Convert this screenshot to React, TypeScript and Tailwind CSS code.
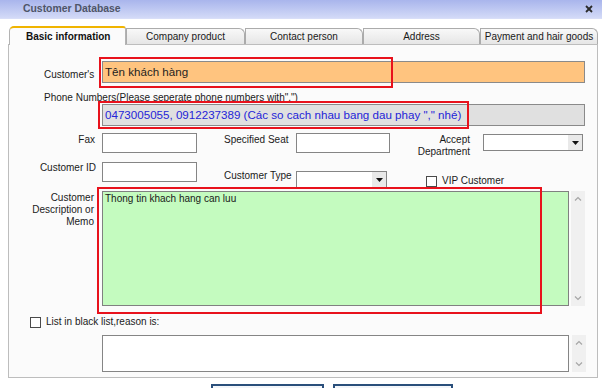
import React from "react";

const Chevron = ({ up }: { up?: boolean }) => (
  <svg width="8" height="5" viewBox="0 0 8 5">
    <polyline
      points={up ? "1,4.5 4,1.5 7,4.5" : "1,0.5 4,3.5 7,0.5"}
      fill="none"
      stroke="#a6a6a6"
      strokeWidth="1.2"
    />
  </svg>
);

const Scroll = ({ h }: { h: string }) => (
  <div className={`${h} w-[14px] bg-[#f0f0f0] flex flex-col items-center justify-between py-[5px]`}>
    <Chevron up />
    <Chevron />
  </div>
);

const Select = ({ w }: { w: string }) => (
  <div className={`${w} h-[17px] bg-white border border-[#858585] flex justify-end`}>
    <div className="w-[14px] h-full bg-[#e9e9e9] flex items-center justify-center">
      <svg width="7" height="4" viewBox="0 0 7 4">
        <polygon points="0,0 7,0 3.5,4" fill="#111" />
      </svg>
    </div>
  </div>
);

const Red = ({ cls }: { cls: string }) => (
  <div className={`absolute border-2 border-[#e8121c] pointer-events-none ${cls}`} />
);

export default function App() {
  return (
    <div className="w-[602px] h-[388px] overflow-hidden bg-white font-['Liberation_Sans',Arial,sans-serif] text-[10px] text-[#1a1a1a]">
      {/* title bar */}
      <div className="h-[19px] flex items-center justify-between pl-[23px] pr-[9px] bg-gradient-to-b from-[#a9b5ec] to-[#d3daf7] border-b border-[#d8def8]">
        <span className="text-[10.4px] font-bold text-[#4e5568] leading-none">Customer Database</span>
        <svg width="8" height="8" viewBox="0 0 8 8">
          <line x1="1" y1="1" x2="7" y2="7" stroke="#2b2b2b" strokeWidth="1.8" />
          <line x1="7" y1="1" x2="1" y2="7" stroke="#2b2b2b" strokeWidth="1.8" />
        </svg>
      </div>

      {/* tabs */}
      <div className="mt-[7px] pl-[9px] flex items-end h-[18px]">
        <div className="relative z-10 -mb-px w-[117px] h-[19px] bg-[#fbfbfb] border-t-2 border-l border-r border-t-[#f0b400] border-l-[#b3b3b3] border-r-[#b3b3b3] rounded-tl-[5px] rounded-tr-[3px] pl-[16px] pt-[3px] font-bold leading-[12px] text-[#111]">
          Basic information
        </div>
        {[
          ["Company product", "w-[119px]"],
          ["Contact person", "w-[118px]"],
          ["Address", "w-[117px]"],
          ["Payment and hair goods", "w-[118px]"],
        ].map(([t, w]) => (
          <div
            key={t}
            className={`${w} h-[16px] border border-b-0 border-[#ababab] rounded-tr-[6px] bg-gradient-to-b from-[#f8f8f8] to-[#e6e6e6] flex items-center justify-center leading-none text-[#1a1a1a]`}
          >
            {t}
          </div>
        ))}
      </div>

      {/* panel */}
      <div className="ml-[8px] w-[590px] h-[334px] border border-[#bdbdbd] bg-[#fbfbfb]">
        {/* Customer's */}
        <div className="mt-[16px] flex">
          <div className="w-[93px] pl-[35px] pt-[8px] leading-[12px]">Customer&apos;s</div>
          <div className="relative w-[483px] h-[22px] bg-[#ffc47f] border border-[#8a8a8a] pl-[2px] text-[11.6px] leading-[19px] text-[#1e1e1e]">
            Tên khách hàng
            <Red cls="-left-[4px] -top-[5px] w-[294px] h-[31px]" />
          </div>
        </div>

        {/* Phone */}
        <div className="mt-[8px] pl-[35px] h-[13px] leading-[13px] whitespace-nowrap">
          Phone Numbers(Please seperate phone numbers with&quot;,&quot;)
        </div>
        <div className="ml-[93px] relative w-[483px] h-[22px] bg-[#e0e0e0] border border-[#8a8a8a] pl-[2px] text-[11.6px] leading-[20px] text-[#2424d8] whitespace-nowrap">
          0473005055, 0912237389 (Các so cach nhau bang dau phay &quot;,&quot; nhé)
          <Red cls="-left-[5px] -top-[4px] w-[371px] h-[28px]" />
        </div>

        {/* Fax row */}
        <div className="mt-[7px] h-[20px] flex items-start">
          <div className="w-[93px] text-right pr-[7px] pt-[1px] leading-[12px]">Fax</div>
          <div className="w-[95px] h-[20px] bg-white border border-[#858585]" />
          <div className="ml-[27px] w-[72px] pt-[1px] leading-[12px] whitespace-nowrap">Specified Seat</div>
          <div className="w-[94px] h-[20px] bg-white border border-[#858585]" />
          <div className="w-[80px] text-right pt-[1px] leading-[12px]">
            Accept
            <br />
            Department
          </div>
          <div className="ml-[13px] mt-[1px]">
            <Select w="w-[100px]" />
          </div>
        </div>

        {/* Customer ID row */}
        <div className="mt-[9px] h-[26px] flex items-start">
          <div className="w-[93px] text-right pr-[6px] leading-[12px]">Customer ID</div>
          <div className="w-[95px] h-[20px] bg-white border border-[#858585]" />
          <div className="ml-[27px] w-[72px] pt-[8px] leading-[12px] whitespace-nowrap">Customer Type</div>
          <div className="mt-[9px]">
            <Select w="w-[91px]" />
          </div>
          <div className="ml-[39px] mt-[13px] flex items-center">
            <div className="w-[11px] h-[11px] bg-white border border-[#4a4a4a]" />
            <span className="ml-[5px] leading-[12px]">VIP Customer</span>
          </div>
        </div>

        {/* Memo */}
        <div className="mt-[3px] flex">
          <div className="w-[93px] text-right pr-[8px] pt-[1px] leading-[12px]">
            Customer
            <br />
            Description or
            <br />
            Memo
          </div>
          <div className="relative w-[467px] h-[115px] bg-[#c4fbbf] border border-[#808080] pl-[2px] pt-[1px] leading-[12px]">
            Thong tin khach hang can luu
            <Red cls="-left-[6px] -top-[5px] w-[445px] h-[127px]" />
          </div>
          <div className="ml-[2px]">
            <Scroll h="h-[115px]" />
          </div>
        </div>

        {/* Black list */}
        <div className="mt-[10px] pl-[21px] flex items-center">
          <div className="w-[11px] h-[11px] bg-white border border-[#4a4a4a]" />
          <span className="ml-[5px] leading-[12px]">List in black list,reason is:</span>
        </div>
        <div className="mt-[7px] ml-[93px] flex">
          <div className="w-[467px] h-[37px] bg-white border border-[#858585]" />
          <div className="ml-[3px]">
            <Scroll h="h-[37px]" />
          </div>
        </div>
      </div>

      {/* buttons */}
      <div className="mt-[6px] pl-[211px] flex">
        <div className="w-[113px] h-[24px] border-2 border-[#2a4f7b] bg-gradient-to-b from-[#f4f7fb] to-[#d8e1ee]" />
        <div className="ml-[9px] w-[120px] h-[24px] border-2 border-[#2a4f7b] bg-gradient-to-b from-[#f4f7fb] to-[#d8e1ee]" />
      </div>
    </div>
  );
}
